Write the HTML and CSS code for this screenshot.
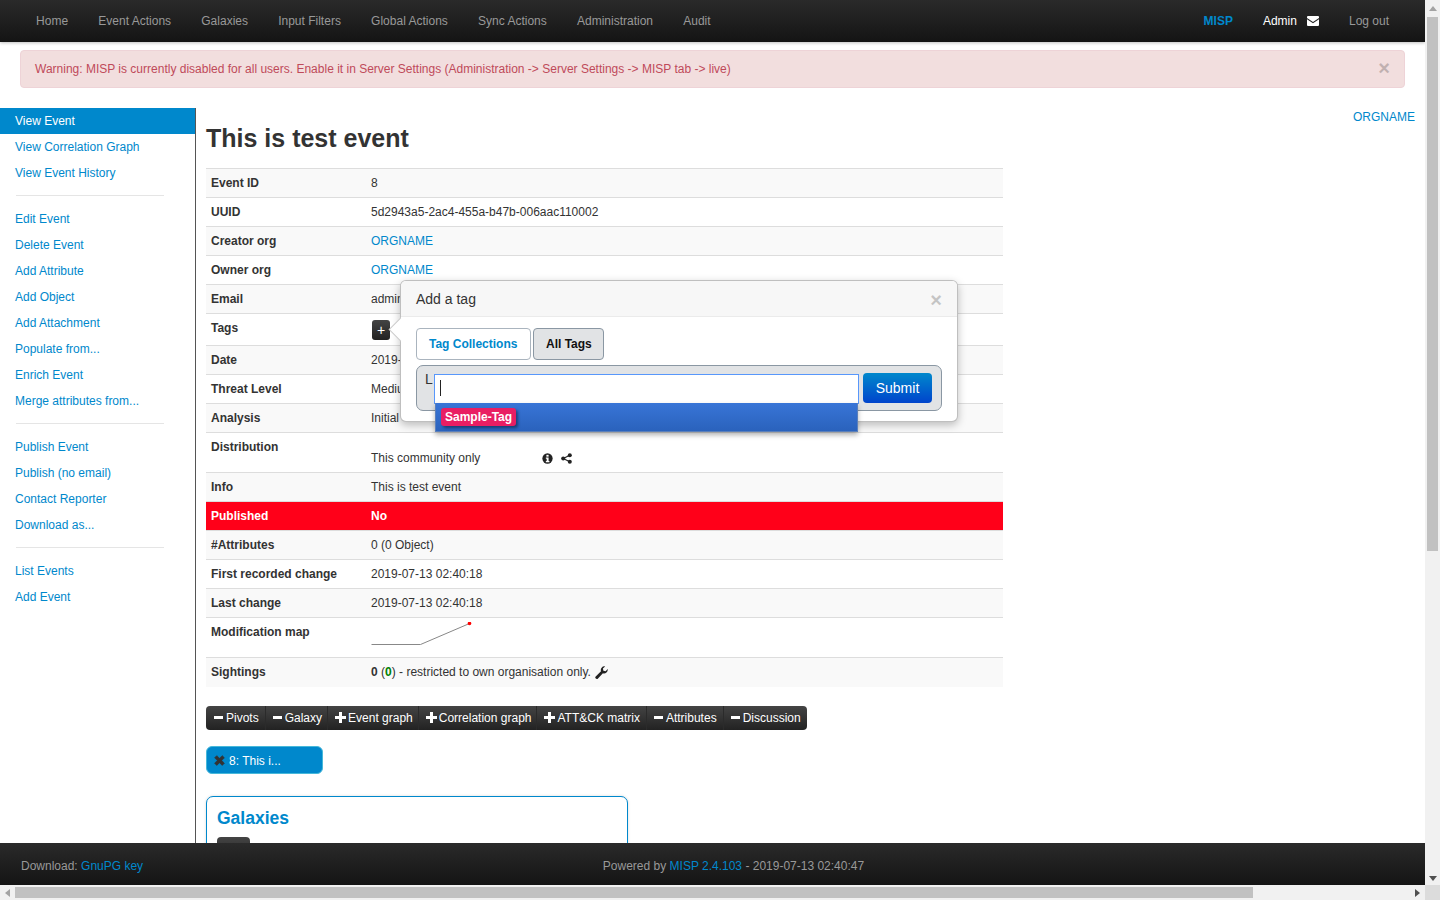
FILE: index.html
```html
<!DOCTYPE html>
<html lang="en">
<head>
<meta charset="utf-8">
<title>MISP</title>
<link rel="stylesheet" href="styles.css">
</head>
<body>
<div class="window">
  <div class="viewport">
    <div class="page">
      <nav class="navbar">
        <ul class="nav-left">
          <li>Home</li><li>Event Actions</li><li>Galaxies</li><li>Input Filters</li><li>Global Actions</li><li>Sync Actions</li><li>Administration</li><li>Audit</li>
        </ul>
        <div class="nav-right">
          <span class="nav-org">MISP</span>
          <span class="nav-admin">Admin
            <svg class="env" viewBox="0 0 12 10" width="12" height="10"><path d="M1 0h10a1 1 0 0 1 1 1v1L6 6 0 2V1a1 1 0 0 1 1-1z" fill="#fff"/><path d="M0 3.2 6 7.2l6-4V9a1 1 0 0 1-1 1H1a1 1 0 0 1-1-1z" fill="#fff"/></svg>
          </span>
          <span class="nav-logout">Log out</span>
        </div>
      </nav>
      <div class="alert">
        <span>Warning: MISP is currently disabled for all users. Enable it in Server Settings (Administration -&gt; Server Settings -&gt; MISP tab -&gt; live)</span>
        <span class="alert-close">×</span>
      </div>
      <div class="body-row">
        <aside class="sidebar">
          <a class="side-item active">View Event</a>
          <a class="side-item">View Correlation Graph</a>
          <a class="side-item">View Event History</a>
          <hr class="side-div">
          <a class="side-item">Edit Event</a>
          <a class="side-item">Delete Event</a>
          <a class="side-item">Add Attribute</a>
          <a class="side-item">Add Object</a>
          <a class="side-item">Add Attachment</a>
          <a class="side-item">Populate from...</a>
          <a class="side-item">Enrich Event</a>
          <a class="side-item">Merge attributes from...</a>
          <hr class="side-div">
          <a class="side-item">Publish Event</a>
          <a class="side-item">Publish (no email)</a>
          <a class="side-item">Contact Reporter</a>
          <a class="side-item">Download as...</a>
          <hr class="side-div">
          <a class="side-item">List Events</a>
          <a class="side-item">Add Event</a>
        </aside>
        <main class="content">
          <div class="org-link">ORGNAME</div>
          <h2 class="title">This is test event</h2>
          <table class="meta">
            <tr><th>Event ID</th><td>8</td></tr>
            <tr><th>UUID</th><td>5d2943a5-2ac4-455a-b47b-006aac110002</td></tr>
            <tr><th>Creator org</th><td><a class="lnk">ORGNAME</a></td></tr>
            <tr><th>Owner org</th><td><a class="lnk">ORGNAME</a></td></tr>
            <tr><th>Email</th><td>admin@admin.test</td></tr>
            <tr class="tags-row"><th>Tags</th><td><span class="add-tag">+</span></td></tr>
            <tr><th>Date</th><td>2019-07-13</td></tr>
            <tr><th>Threat Level</th><td>Medium</td></tr>
            <tr><th>Analysis</th><td>Initial</td></tr>
            <tr class="dist-row"><th>Distribution</th><td><span class="dist-text">This community only</span>
              <svg class="dist-ico" viewBox="0 0 12 12" width="11" height="11"><circle cx="6" cy="6" r="5.6" fill="#222"/><rect x="4.8" y="2" width="2.4" height="2" fill="#fff"/><path d="M4.2 5h3v3.6h.9V10H4.2V8.6h.9V6.3h-.9z" fill="#fff"/></svg>
              <svg class="dist-ico share" viewBox="0 0 12 12" width="11" height="11"><circle cx="9.6" cy="2.4" r="2.2" fill="#222"/><circle cx="9.6" cy="9.6" r="2.2" fill="#222"/><circle cx="2.4" cy="6" r="2.2" fill="#222"/><path d="M9.6 2.4 2.4 6l7.2 3.6" fill="none" stroke="#222" stroke-width="1.2"/></svg>
            </td></tr>
            <tr><th>Info</th><td>This is test event</td></tr>
            <tr class="published"><th>Published</th><td>No</td></tr>
            <tr><th>#Attributes</th><td>0 (0 Object)</td></tr>
            <tr><th>First recorded change</th><td>2019-07-13 02:40:18</td></tr>
            <tr><th>Last change</th><td>2019-07-13 02:40:18</td></tr>
            <tr class="map-row"><th>Modification map</th><td>
              <svg class="spark" viewBox="0 0 102 24" width="102" height="24"><path d="M0.5 22.5H49.5L98.500 1.500" fill="none" stroke="#888" stroke-width="1"/><circle cx="98.500" cy="1.500" r="1.800" fill="#f00"/></svg>
            </td></tr>
            <tr><th>Sightings</th><td><b>0</b> (<b class="green">0</b>) - restricted to own organisation only.
              <svg class="wrench" viewBox="0 0 13 13" width="13" height="13"><path d="M12.700 3.100a3.700 3.700 0 0 1-4.800 4.100L3 12.400a1.500 1.500 0 0 1-2.300-2L6 5.300A3.700 3.700 0 0 1 10.100.4L7.900 2.500l.5 2.200 2.200.5z" fill="#222"/></svg>
            </td></tr>
          </table>

          <div class="btn-group">
            <span class="tgl"><i class="ico-minus"></i>Pivots</span>
            <span class="tgl"><i class="ico-minus"></i>Galaxy</span>
            <span class="tgl"><i class="ico-plus"></i>Event graph</span>
            <span class="tgl"><i class="ico-plus"></i>Correlation graph</span>
            <span class="tgl wide"><i class="ico-plus"></i>ATT&amp;CK matrix</span>
            <span class="tgl wide"><i class="ico-minus"></i>Attributes</span>
            <span class="tgl wide"><i class="ico-minus"></i>Discussion</span>
          </div>

          <div class="event-tab">
            <svg class="tab-x" viewBox="0 0 12 12" width="13" height="13"><path d="M1.500 3.500 3.500 1.500 6 4l2.500-2.500 2 2L8 6l2.500 2.500-2 2L6 8l-2.500 2.500-2-2L4 6z" fill="#333" stroke="#333" stroke-width=".6"/></svg>
            <span class="tab-label">8: This i...</span>
          </div>

          <section class="galaxies">
            <h3 class="gal-title">Galaxies</h3>
            <div class="gal-btn"></div>
          </section>

          <div class="popover">
            <div class="pop-arrow"></div>
            <div class="pop-head"><span>Add a tag</span><span class="pop-close">×</span></div>
            <div class="pop-body">
              <div class="pop-tabs">
                <span class="pop-tab first">Tag Collections</span>
                <span class="pop-tab on">All Tags</span>
              </div>
              <div class="picker">
                <span class="picker-l">L</span>
                <div class="chosen">
                  <div class="chosen-input"><span class="caret"></span></div>
                  <div class="chosen-drop"><span class="tag">Sample-Tag</span></div>
                </div>
                <span class="submit">Submit</span>
              </div>
            </div>
          </div>
        </main>
      </div>
    </div>
    <footer class="footer">
      <div class="foot-left">Download: <a class="foot-link">GnuPG key</a></div>
      <div class="foot-center">Powered by <a class="foot-link">MISP 2.4.103</a> - 2019-07-13 02:40:47</div>
    </footer>
  </div>
  <div class="vbar">
    <span class="arr-up"></span>
    <div class="vthumb"></div>
    <span class="arr-down"></span>
  </div>
  <div class="hbar">
    <span class="arr-left"></span>
    <div class="htrack"><div class="hthumb"></div></div>
    <span class="arr-right"></span>
  </div>
  <div class="corner"></div>
</div>
</body>
</html>
```
FILE: styles.css
```css
* { box-sizing: border-box; }
html, body { margin: 0; padding: 0; height: 100%; overflow: hidden; }
body { font-family: "Liberation Sans", Arial, sans-serif; font-size: 12px; line-height: 20px; color: #333; background: #fff; }

.window { display: grid; grid-template-columns: 1425px 15px; grid-template-rows: 885px 15px; width: 1440px; height: 900px; }
.viewport { display: flex; flex-direction: column; overflow: hidden; background: #fff; }
.page { flex: 1; min-height: 0; overflow: hidden; }

.navbar { height: 42px; display: flex; justify-content: space-between; background: linear-gradient(#2a2a2a, #141414); box-shadow: 0 1px 3px rgba(0,0,0,.25); padding-left: 21px; color: #999; line-height: 42px; position: relative; z-index: 2; }
.nav-left { display: flex; list-style: none; margin: 0; padding: 0; }
.nav-left li { padding: 0 15.12px; }
.nav-right { display: flex; padding-right: 36px; }
.nav-org { color: #0088cc; font-weight: bold; margin-right: 30px; }
.nav-admin { color: #fff; margin-right: 30px; display: flex; align-items: center; }
.env { margin-left: 10px; }

.alert { margin: 8px 20px 0; height: 38px; padding: 0 14px; background: #f2dede; border: 1px solid #eed3d7; border-radius: 4px; color: #bf4a5a; display: flex; justify-content: space-between; align-items: center; }
.alert-close { color: #000; opacity: .2; font-size: 20px; font-weight: bold; line-height: 20px; margin-top: -3px; }

.body-row { display: flex; margin-top: 20px; align-items: stretch; }
.sidebar { width: 196px; flex: none; border-right: 1px solid #555; height: 800px; display: flex; flex-direction: column; }
.side-item { display: block; height: 26px; line-height: 26px; padding-left: 15px; color: #0088cc; }
.side-item.active { background: #0088cc; color: #fff; }
.side-div { height: 1px; border: 0; background: #e5e5e5; margin: 9px 0 10px 16px; flex: none; width: 148px; }

.content { flex: 1; position: relative; padding-left: 10px; min-width: 0; }
.org-link { position: absolute; right: 10px; top: -1px; color: #0088cc; line-height: 20px; }
.title { margin: 0; padding-top: 10px; height: 60px; font-size: 25px; line-height: 40px; font-weight: bold; color: #333; }

.meta { width: 797px; border-collapse: collapse; table-layout: fixed; }
.meta th, .meta td { height: 29px; padding: 4px 5px; border-top: 1px solid #ddd; text-align: left; vertical-align: top; line-height: 20px; }
.meta th { width: 160px; font-weight: bold; }
.meta tr:nth-child(odd) th, .meta tr:nth-child(odd) td { background: #f9f9f9; }
.meta .lnk { color: #0088cc; }
.meta .green { color: green; }
.tags-row th, .tags-row td { height: 32px; }
.add-tag { display: block; width: 18px; height: 20px; margin: 2px 0 0 1px; background: linear-gradient(#444, #222); border-radius: 3px; color: #fff; text-align: center; font-size: 14px; line-height: 20px; }
.dist-row th, .dist-row td { height: 40px; }
.dist-row td { padding-top: 15px; }
.dist-text { display: inline-block; width: 168px; }
.dist-ico { vertical-align: -2px; }
.dist-ico.share { margin-left: 4px; }
.map-row th, .map-row td { height: 40px; }
.spark { display: block; margin-top: 0; }
.wrench { vertical-align: -3px; margin-left: 1px; }
.meta .published th, .meta .published td { background: #ff0019; background-clip: padding-box; color: #fff; font-weight: bold; }

.btn-group { display: inline-flex; margin-top: 19px; height: 24px; background: linear-gradient(#444, #222); border-radius: 4px; color: #fff; line-height: 23px; vertical-align: top; }
.tgl { display: flex; align-items: center; padding: 1px 5px 0 7px; border-left: 1px solid #2b2b2b; white-space: nowrap; }
.tgl:first-child { border-left: 0; padding-left: 8px; padding-right: 6px; }
.tgl.wide { padding-right: 6px; }
.ico-minus { display: block; width: 9px; height: 3px; background: #fff; margin: -2px 3px 0 0; }
.ico-plus { display: block; width: 11px; height: 11px; margin: -2px 2px 0 0; background: linear-gradient(#fff, #fff) center / 11px 3px no-repeat, linear-gradient(#fff, #fff) center / 3px 11px no-repeat; }

.event-tab { display: flex; align-items: center; width: 117px; height: 28px; margin-top: 16px; padding-left: 6px; background: #0088cc; border: 1px solid #46b8da; border-radius: 6px; color: #fff; }
.tab-x { margin-right: 3px; margin-top: 2px; }
.tab-label { margin-top: 2px; }

.galaxies { width: 422px; height: 120px; margin-top: 22px; padding: 0 10px; border: 1px solid #0088cc; border-radius: 7px 7px 0 0; background: #fff; box-shadow: 0 0 3px rgba(0,0,0,.15); }
.gal-title { margin: 0; padding-top: 11px; font-size: 17.5px; line-height: 20px; font-weight: bold; color: #0088cc; height: 40px; }
.gal-btn { width: 33px; height: 24px; background: linear-gradient(#444, #222); border-radius: 4px; }

.popover { position: absolute; left: 204px; top: 172px; width: 558px; height: 142px; background: #fff; border: 1px solid rgba(0,0,0,.25); border-radius: 6px; box-shadow: 0 3px 9px rgba(0,0,0,.25); z-index: 3; }
.pop-arrow { position: absolute; left: -9px; top: 40px; width: 17px; height: 17px; background: #fff; border-left: 1px solid rgba(0,0,0,.2); border-bottom: 1px solid rgba(0,0,0,.2); transform: rotate(45deg); }
.pop-head { position: relative; height: 36px; padding: 0 15px; display: flex; justify-content: space-between; align-items: center; background: #f7f7f7; border-bottom: 1px solid #ebebeb; border-radius: 5px 5px 0 0; font-size: 14px; }
.pop-close { color: #000; opacity: .2; font-size: 20px; font-weight: bold; line-height: 20px; margin-top: 3px; }
.pop-body { position: relative; padding: 11px 15px 0; }
.pop-tabs { display: flex; gap: 2px; }
.pop-tab { height: 32px; line-height: 30px; padding: 0 0 0 12px; border: 1px solid #aab4be; border-radius: 4px; color: #0088cc; font-weight: bold; }
.pop-tab.first { width: 115px; }
.pop-tab.on { width: 71px; background: #e1e3e5; color: #111; border-color: #8a97a3; }
.picker { position: relative; display: flex; align-items: flex-start; height: 46px; margin-top: 5px; padding-left: 8px; background: #e1e3e5; border: 1px solid #8a97a3; border-radius: 7px; }
.picker-l { line-height: 22px; font-size: 14px; color: #333; margin-top: 2px; width: 9px; }
.chosen { position: relative; width: 425px; margin-top: 8px; z-index: 1; }
.chosen-input { height: 30px; background: #fff; border: 1px solid #5897fb; padding: 4px 5px; }
.caret { display: block; width: 1px; height: 16px; margin-top: 1px; background: #222; }
.chosen-drop { width: 423px; margin-left: 1px; margin-top: -1px; height: 29px; padding: 5px 5px 0; background: linear-gradient(#3875d7 0%, #2a62bc 100%); box-shadow: 0 3px 5px rgba(0,0,0,.3); border: 1px solid #5b80bb; border-top: 0; }
.tag { display: inline-block; height: 18px; padding: 0 4px; line-height: 18px; background: #e91e63; color: #fff; font-weight: bold; border-radius: 3px; box-shadow: 2px 2px 3px rgba(0,0,0,.4); vertical-align: top; }
.submit { display: block; margin: 7px 0 0 4px; width: 69px; height: 30px; line-height: 31px; text-align: center; font-size: 14px; color: #fff; background: linear-gradient(#0088cc, #0044cc); border-radius: 4px; }

.footer { flex: none; height: 42px; display: grid; grid-template-columns: 1fr; background: linear-gradient(#2a2a2a, #141414); color: #999; line-height: 46px; position: relative; z-index: 4; }
.foot-left { grid-area: 1 / 1; padding-left: 21px; }
.foot-center { grid-area: 1 / 1; text-align: center; padding-left: 42px; }
.foot-link { color: #0088cc; }

.vbar { background: #f1f1f1; display: flex; flex-direction: column; align-items: center; position: relative; }
.vthumb { width: 11px; height: 534px; background: #c1c1c1; margin-top: 6px; }
.arr-up { display: block; margin-top: 6px; width: 0; height: 0; border: 4px solid transparent; border-top: 0; border-bottom: 5px solid #a3a3a3; }
.arr-down { display: block; margin-top: auto; margin-bottom: 4px; width: 0; height: 0; border: 4px solid transparent; border-bottom: 0; border-top: 5px solid #505050; }
.hbar { background: #f1f1f1; display: flex; align-items: center; grid-column: 1; grid-row: 2; }
.htrack { flex: 1; height: 11px; margin: 0 6px 0 5px; }
.hthumb { width: 1238px; height: 11px; background: #c1c1c1; }
.arr-left { display: block; margin-left: 5px; width: 0; height: 0; border: 4px solid transparent; border-left: 0; border-right: 5px solid #a3a3a3; }
.arr-right { display: block; margin-right: 5px; width: 0; height: 0; border: 4px solid transparent; border-right: 0; border-left: 5px solid #505050; }
.corner { background: #dcdcdc; }
```
